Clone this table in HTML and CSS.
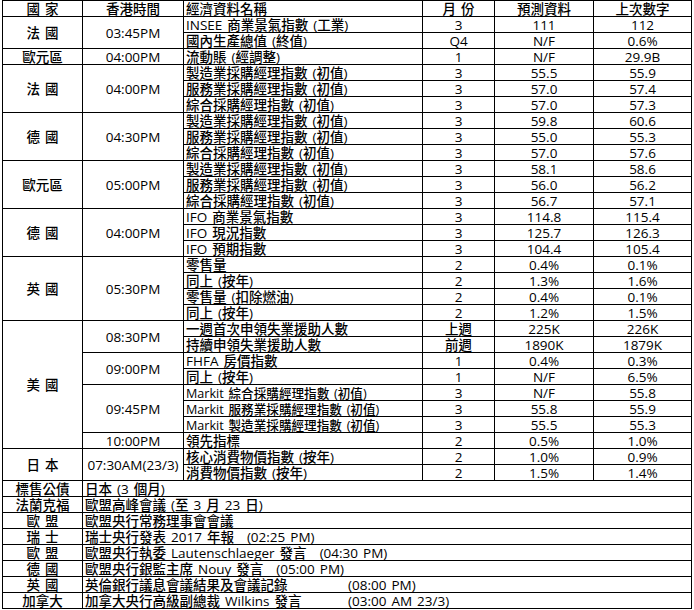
FILE: index.html
```html
<!DOCTYPE html>
<html lang="zh-Hant">
<head>
<meta charset="utf-8">
<link rel="stylesheet" href="styles.css">
</head>
<body>
<div class="sheet">
  <div class="c">國 家</div><div class="c">香港時間</div><div class="c l">經濟資料名稱</div><div class="c">月 份</div><div class="c">預測資料</div><div class="c">上次數字</div>

  <div class="c r2">法 國</div><div class="c r2">03:45PM</div><div class="c l">INSEE 商業景氣指數 (工業)</div><div class="c">3</div><div class="c">111</div><div class="c">112</div>
  <div class="c l">國內生產總值 (終值)</div><div class="c">Q4</div><div class="c">N/F</div><div class="c">0.6%</div>

  <div class="c">歐元區</div><div class="c">04:00PM</div><div class="c l">流動賬 (經調整)</div><div class="c">1</div><div class="c">N/F</div><div class="c">29.9B</div>

  <div class="c r3">法 國</div><div class="c r3">04:00PM</div><div class="c l">製造業採購經理指數 (初值)</div><div class="c">3</div><div class="c">55.5</div><div class="c">55.9</div>
  <div class="c l">服務業採購經理指數 (初值)</div><div class="c">3</div><div class="c">57.0</div><div class="c">57.4</div>
  <div class="c l">綜合採購經理指數 (初值)</div><div class="c">3</div><div class="c">57.0</div><div class="c">57.3</div>

  <div class="c r3">德 國</div><div class="c r3">04:30PM</div><div class="c l">製造業採購經理指數 (初值)</div><div class="c">3</div><div class="c">59.8</div><div class="c">60.6</div>
  <div class="c l">服務業採購經理指數 (初值)</div><div class="c">3</div><div class="c">55.0</div><div class="c">55.3</div>
  <div class="c l">綜合採購經理指數 (初值)</div><div class="c">3</div><div class="c">57.0</div><div class="c">57.6</div>

  <div class="c r3">歐元區</div><div class="c r3">05:00PM</div><div class="c l">製造業採購經理指數 (初值)</div><div class="c">3</div><div class="c">58.1</div><div class="c">58.6</div>
  <div class="c l">服務業採購經理指數 (初值)</div><div class="c">3</div><div class="c">56.0</div><div class="c">56.2</div>
  <div class="c l">綜合採購經理指數 (初值)</div><div class="c">3</div><div class="c">56.7</div><div class="c">57.1</div>

  <div class="c r3">德 國</div><div class="c r3">04:00PM</div><div class="c l">IFO 商業景氣指數</div><div class="c">3</div><div class="c">114.8</div><div class="c">115.4</div>
  <div class="c l">IFO 現況指數</div><div class="c">3</div><div class="c">125.7</div><div class="c">126.3</div>
  <div class="c l">IFO 預期指數</div><div class="c">3</div><div class="c">104.4</div><div class="c">105.4</div>

  <div class="c r4">英 國</div><div class="c r4">05:30PM</div><div class="c l">零售量</div><div class="c">2</div><div class="c">0.4%</div><div class="c">0.1%</div>
  <div class="c l">同上 (按年)</div><div class="c">2</div><div class="c">1.3%</div><div class="c">1.6%</div>
  <div class="c l">零售量 (扣除燃油)</div><div class="c">2</div><div class="c">0.4%</div><div class="c">0.1%</div>
  <div class="c l">同上 (按年)</div><div class="c">2</div><div class="c">1.2%</div><div class="c">1.5%</div>

  <div class="c r8">美 國</div><div class="c r2">08:30PM</div><div class="c l">一週首次申領失業援助人數</div><div class="c">上週</div><div class="c">225K</div><div class="c">226K</div>
  <div class="c l">持續申領失業援助人數</div><div class="c">前週</div><div class="c">1890K</div><div class="c">1879K</div>
  <div class="c r2">09:00PM</div><div class="c l">FHFA 房價指數</div><div class="c">1</div><div class="c">0.4%</div><div class="c">0.3%</div>
  <div class="c l">同上 (按年)</div><div class="c">1</div><div class="c">N/F</div><div class="c">6.5%</div>
  <div class="c r3">09:45PM</div><div class="c l mk">Markit 綜合採購經理指數 (初值)</div><div class="c">3</div><div class="c">N/F</div><div class="c">55.8</div>
  <div class="c l mk">Markit 服務業採購經理指數 (初值)</div><div class="c">3</div><div class="c">55.8</div><div class="c">55.9</div>
  <div class="c l mk">Markit 製造業採購經理指數 (初值)</div><div class="c">3</div><div class="c">55.5</div><div class="c">55.3</div>
  <div class="c">10:00PM</div><div class="c l">領先指標</div><div class="c">2</div><div class="c">0.5%</div><div class="c">1.0%</div>

  <div class="c r2">日 本</div><div class="c r2">07:30AM(23/3)</div><div class="c l">核心消費物價指數 (按年)</div><div class="c">2</div><div class="c">1.0%</div><div class="c">0.9%</div>
  <div class="c l">消費物價指數 (按年)</div><div class="c">2</div><div class="c">1.5%</div><div class="c">1.4%</div>

  <div class="c">標售公債</div><div class="c l w5">日本 (3 個月)</div>
  <div class="c">法蘭克福</div><div class="c l w5">歐盟高峰會議 (至 3 月 23 日)</div>
  <div class="c">歐 盟</div><div class="c l w5">歐盟央行常務理事會會議</div>
  <div class="c">瑞 士</div><div class="c l w5">瑞士央行發表 2017 年報<span class="g1">(02:25 PM)</span></div>
  <div class="c">歐 盟</div><div class="c l w5">歐盟央行執委 Lautenschlaeger 發言<span class="g1">(04:30 PM)</span></div>
  <div class="c">德 國</div><div class="c l w5">歐盟央行銀監主席 Nouy 發言<span class="g1">(05:00 PM)</span></div>
  <div class="c">英 國</div><div class="c l w5"><span class="tab">英倫銀行議息會議結果及會議記錄</span>(08:00 PM)</div>
  <div class="c">加拿大</div><div class="c l w5"><span class="tab">加拿大央行高級副總裁 Wilkins 發言</span>(03:00 AM 23/3)</div>
</div>
</body>
</html>
```

FILE: styles.css
```css
html, body {
  margin: 0;
  padding: 0;
  background: #ffffff;
}

body {
  font-family: "Open Sans", "Noto Sans CJK TC", sans-serif;
  font-size: 13.5px;
  font-weight: 500;
  color: #000000;
}

.sheet {
  box-sizing: border-box;
  width: 690px;
  margin-left: 2px;
  display: grid;
  grid-template-columns: 79px 100px 238px 71px 98px 97px;
  grid-auto-rows: 15px;
  gap: 1px;
  padding: 1px;
  background: #000000;
}

.c {
  box-sizing: border-box;
  background: #ffffff;
  line-height: 15px;
  padding-top: 2px;
  white-space: pre;
  word-spacing: 1.5px;
  display: flex;
  align-items: center;
  justify-content: center;
}

.l {
  justify-content: flex-start;
  padding-left: 2px;
}

.mk {
  font-size: 12.6px;
}

.r2 { grid-row: span 2; }
.r3 { grid-row: span 3; }
.r4 { grid-row: span 4; }
.r8 { grid-row: span 8; }
.w5 { grid-column: span 5; }

.g1 { margin-left: 13px; }

.tab {
  display: inline-block;
  min-width: 263px;
}
```
